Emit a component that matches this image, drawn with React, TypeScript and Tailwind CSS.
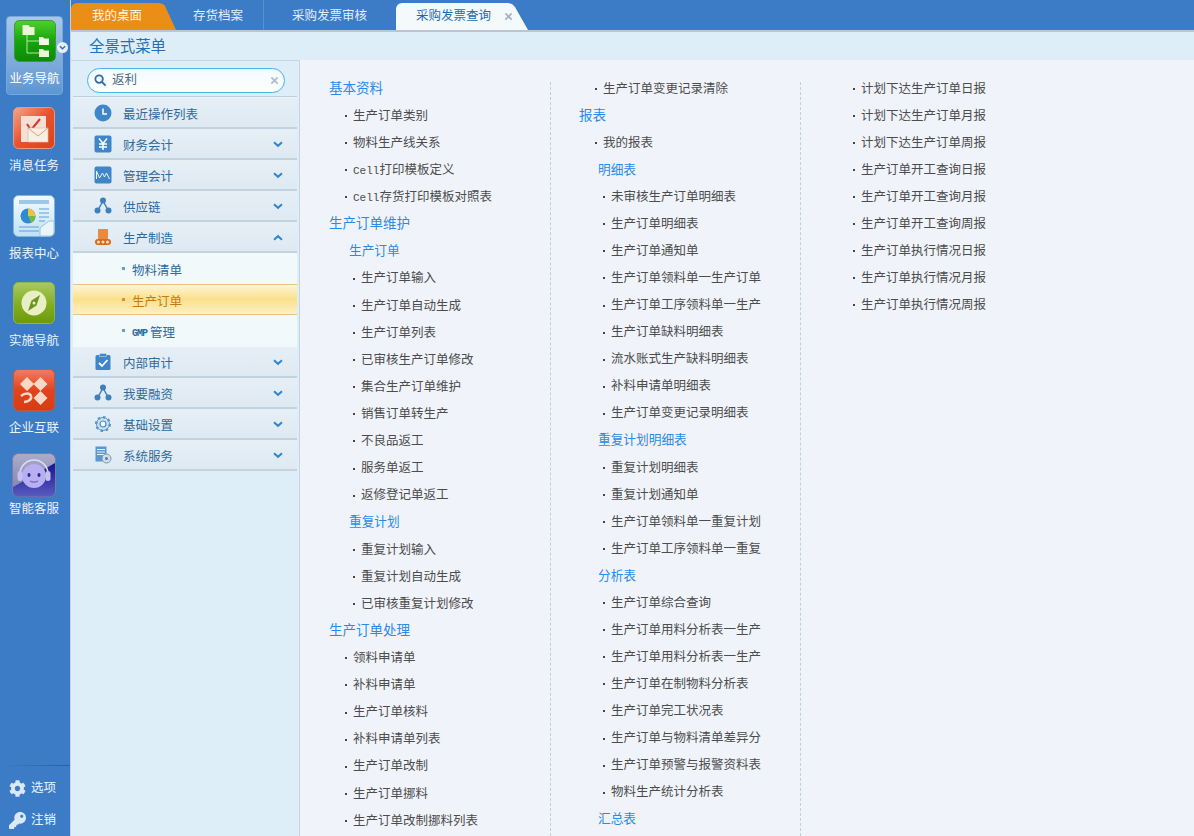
import type { ReactNode } from 'react'
import { FaCog, FaKey } from 'react-icons/fa'

const cjk = "font-['Liberation_Sans','Noto_Sans_CJK_SC',sans-serif]"

function TreeTile() {
  return (
    <svg viewBox="0 0 42 42" className="w-[42px] h-[42px]">
      <defs>
        <linearGradient id="tg" x1="0" y1="0" x2="0" y2="1">
          <stop offset="0" stopColor="#4fd02c" />
          <stop offset="0.5" stopColor="#16a50c" />
          <stop offset="1" stopColor="#0b8a08" />
        </linearGradient>
      </defs>
      <rect x="0.5" y="0.5" width="41" height="41" rx="5" fill="url(#tg)" stroke="#3c9a3a" />
      <path d="M13 15V33M13 21H25M13 33H25" stroke="#b8e8a0" strokeWidth="1" fill="none" />
      <path d="M8.500 5h6l1.500 2h4.500v8h-12z" fill="#e9f6d5" />
      <path d="M25 17h4l1 1.500h5V25H25z" fill="#f2f8e6" />
      <path d="M25 29h4l1 1.500h5V37H25z" fill="#e9f6d5" />
    </svg>
  )
}

function MailTile() {
  return (
    <svg viewBox="0 0 42 42" className="w-[42px] h-[42px]">
      <defs>
        <linearGradient id="mg" x1="0" y1="0" x2="1" y2="1">
          <stop offset="0" stopColor="#f8a58c" />
          <stop offset="0.5" stopColor="#e9512a" />
          <stop offset="1" stopColor="#d8441c" />
        </linearGradient>
      </defs>
      <rect x="0.5" y="0.500" width="41" height="41" rx="5" fill="url(#mg)" stroke="#e89a80" />
      <rect x="8" y="9" width="25" height="26" fill="#f6dfd4" />
      <path d="M14 17l4 6 9-11" stroke="#d8352a" strokeWidth="2" fill="none" />
      <rect x="15" y="21" width="20" height="14" fill="#fbeee3" stroke="#e6b9a0" strokeWidth="0.7" />
      <path d="M15 21l10 8 10-8" stroke="#d9a084" strokeWidth="1" fill="none" />
    </svg>
  )
}

function ReportTile() {
  return (
    <svg viewBox="0 0 42 42" className="w-[42px] h-[42px]">
      <defs>
        <linearGradient id="rg" x1="0" y1="0" x2="0" y2="1">
          <stop offset="0" stopColor="#f4fafe" />
          <stop offset="1" stopColor="#bfe0f4" />
        </linearGradient>
      </defs>
      <rect x="0.5" y="0.5" width="41" height="41" rx="5" fill="url(#rg)" stroke="#7fb4dc" />
      <rect x="6" y="5" width="30" height="4" fill="#9cc8ea" />
      <circle cx="15" cy="21" r="7.500" fill="#2c8ad8" />
      <path d="M15 21V13.500A7.500 7.500 0 0 1 22.500 21z" fill="#f0c040" />
      <path d="M15 21H22.500A7.500 7.500 0 0 1 18 28z" fill="#74b84a" />
      <path d="M26 14H36M26 18H36M26 22H36M26 26H32M6 32H26M6 36H26" stroke="#5d9fd6" strokeWidth="1.200" />
      <path d="M27 41V33l9-7h5v11a4 4 0 0 1-4 4z" fill="#eaf5fb" stroke="#9cc4de" />
    </svg>
  )
}

function CompassTile() {
  return (
    <svg viewBox="0 0 42 42" className="w-[42px] h-[42px]">
      <defs>
        <linearGradient id="cg" x1="0" y1="0" x2="0" y2="1">
          <stop offset="0" stopColor="#a9c963" />
          <stop offset="0.55" stopColor="#82ad1e" />
          <stop offset="1" stopColor="#6c9a0c" />
        </linearGradient>
      </defs>
      <rect x="0.5" y="0.5" width="41" height="41" rx="5" fill="url(#cg)" stroke="#8fb648" />
      <circle cx="21" cy="21" r="12.500" fill="#e8efc4" />
      <path d="M27 13L23.500 23.500 15 29l3.500-10.500z" fill="#6d9420" />
      <circle cx="21" cy="21" r="1.500" fill="#e8efc4" />
    </svg>
  )
}

function LinkTile() {
  return (
    <svg viewBox="0 0 42 42" className="w-[42px] h-[42px]">
      <defs>
        <linearGradient id="lg" x1="0" y1="0" x2="0" y2="1">
          <stop offset="0" stopColor="#f47c62" />
          <stop offset="0.5" stopColor="#e2431c" />
          <stop offset="1" stopColor="#d63c14" />
        </linearGradient>
      </defs>
      <rect x="0.5" y="0.5" width="41" height="41" rx="5" fill="url(#lg)" stroke="#c8552c" />
      <path d="M14 8l7 7-7 7-7-7zM27.500 8l7 7-7 7-7-7zM27.500 22l7 7-7 7-7-7z" fill="#f9d8c6" />
      <path d="M8 27c4-3.500 9-3.500 10 0s-3 6-7 6" stroke="#f9d8c6" strokeWidth="2.500" fill="none" />
    </svg>
  )
}

function ServiceTile() {
  return (
    <svg viewBox="0 0 44 44" className="w-[44px] h-[44px]">
      <defs>
        <linearGradient id="sg" x1="0" y1="0" x2="0" y2="1">
          <stop offset="0" stopColor="#acacc8" />
          <stop offset="1" stopColor="#7c7cb0" />
        </linearGradient>
        <linearGradient id="sn" x1="0" y1="0" x2="0" y2="1">
          <stop offset="0" stopColor="#16168c" />
          <stop offset="1" stopColor="#5a5ac0" />
        </linearGradient>
      </defs>
      <rect x="0.5" y="0.5" width="43" height="43" rx="6" fill="url(#sg)" stroke="#7a7aa8" />
      <path d="M1 34L43 10V38a5.500 5.500 0 0 1-5.500 5.500H6.500A5.500 5.500 0 0 1 1 38z" fill="url(#sn)" />
      <path d="M8 21a14 14 0 0 1 28 0" stroke="#e0dcf6" strokeWidth="1.500" fill="none" />
      <circle cx="22" cy="23" r="12" fill="#b8aef2" />
      <rect x="5.500" y="18" width="5" height="10" rx="2.500" fill="#c8c0ec" />
      <rect x="33.500" y="18" width="5" height="10" rx="2.500" fill="#c8c0ec" />
      <ellipse cx="17" cy="22" rx="1.500" ry="2" fill="#2a2a90" />
      <ellipse cx="27" cy="22" rx="1.500" ry="2" fill="#2a2a90" />
      <path d="M18 28c2 1.500 6 1.500 8 0" stroke="#5a50b8" strokeWidth="1" fill="none" />
    </svg>
  )
}

function RailItem({ tile, label, className }: { tile: ReactNode; label: string; className: string }) {
  return (
    <div className={`flex flex-col items-center pr-[2px] ${className}`}>
      {tile}
      <span className="text-[12.5px] leading-[18px] text-[#eaf3fb] whitespace-nowrap">{label}</span>
    </div>
  )
}

function Rail() {
  return (
    <div className="w-[70px] shrink-0 flex flex-col bg-[#3c7cc6]">
      <div className="relative mt-[16px] ml-[6px] mr-[7px] h-[79px] pt-[3px] rounded-[4px] border border-[#78a8d8] bg-gradient-to-b from-[#a9c8e8] to-[#5e96d2] flex flex-col items-center">
        <TreeTile />
        <span className="mt-[8px] text-[12.500px] leading-[18px] text-white whitespace-nowrap">业务导航</span>
        <span className="absolute -right-[6px] top-[25px] w-[11px] h-[11px] rounded-full bg-[#e4eef6] flex items-center justify-center">
          <svg viewBox="0 0 8 8" className="w-[7px] h-[7px]">
            <path d="M1 2.500l3 3 3-3" stroke="#3c6a98" strokeWidth="1.500" fill="none" />
          </svg>
        </span>
      </div>
      <RailItem tile={<MailTile />} label="消息任务" className="mt-[12px] gap-[8px]" />
      <RailItem tile={<ReportTile />} label="报表中心" className="mt-[20px] gap-[8px]" />
      <RailItem tile={<CompassTile />} label="实施导航" className="mt-[19px] gap-[8px]" />
      <RailItem tile={<LinkTile />} label="企业互联" className="mt-[19px] gap-[8px]" />
      <RailItem tile={<ServiceTile />} label="智能客服" className="mt-[16px] gap-[3px]" />
      <div className="mt-auto h-px bg-gradient-to-r from-transparent to-[#2b5f9e]" />
      <div className="h-[32px] mt-[6px] flex items-center pl-[9px] gap-[5px] text-[12.500px] text-[#eaf3fb]">
        <FaCog className="w-[17px] h-[17px] text-[#dce9f4]" />
        选项
      </div>
      <div className="h-[32px] flex items-center pl-[9px] gap-[5px] text-[12.500px] text-[#eaf3fb]">
        <FaKey className="w-[17px] h-[17px] text-[#dce9f4]" />
        注销
      </div>
    </div>
  )
}

function Tabs() {
  return (
    <div className="h-[30px] shrink-0 bg-[#3c7cc6] flex items-end text-[12.500px]">
      <div className="w-[105px] h-[27px] pl-[21px] leading-[27px] text-[#fdf4e4] rounded-tl-[6px] bg-[#ea8e17] [clip-path:polygon(0_0,88px_0,92px_1px,94px_3px,105px_27px,0_27px)]">
        我的桌面
      </div>
      <div className="w-[88px] h-[30px] pl-[17px] pt-[3px] leading-[27px] text-[#e2eef8] border-r border-[#5a90cc]">
        存货档案
      </div>
      <div className="w-[132px] h-[27px] pl-[28px] leading-[27px] text-[#e2eef8]">采购发票审核</div>
      <div className="w-[132px] h-[27px] pl-[20px] flex items-center bg-[#f4fafc] text-[#1a6cb4] rounded-tl-[6px] [clip-path:polygon(0_0,112px_0,116px_1px,119px_4px,132px_27px,0_27px)]">
        采购发票查询
        <svg viewBox="0 0 10 10" className="w-[9px] h-[9px] ml-[13px]">
          <path d="M1.500 1.500l7 7M8.500 1.500l-7 7" stroke="#a8b4bf" strokeWidth="2" />
        </svg>
      </div>
    </div>
  )
}

const Chevron = ({ up }: { up?: boolean }) => (
  <svg viewBox="0 0 10 7" className={`w-[10px] h-[7px] mt-[2px] ${up ? 'rotate-180' : ''}`}>
    <path d="M1 1.200l4 3.600 4-3.600" stroke="#2f86cf" strokeWidth="2" fill="none" />
  </svg>
)

const iconCls = 'w-[18px] h-[18px] shrink-0'

const icons: Record<string, ReactNode> = {
  clock: (
    <svg viewBox="0 0 18 18" className={iconCls}>
      <circle cx="9" cy="9" r="8.500" fill="#3f86c8" />
      <path d="M9 4.500V10H13" stroke="#fff" strokeWidth="1.500" fill="none" />
    </svg>
  ),
  yen: (
    <svg viewBox="0 0 18 18" className={iconCls}>
      <rect x="0.500" y="0.500" width="17" height="17" rx="2" fill="#3f86c8" />
      <path d="M5 3.500l4 5 4-5M9 8.500V15M5 9h8M5 12h8" stroke="#fff" strokeWidth="1.500" fill="none" />
    </svg>
  ),
  chart: (
    <svg viewBox="0 0 18 18" className={iconCls}>
      <rect x="0.500" y="0.500" width="17" height="17" rx="2" fill="#3f86c8" />
      <path d="M2.500 13V5l3 7 3-5 2 4 2-4 3 6" stroke="#e8f2fa" strokeWidth="1" fill="none" />
    </svg>
  ),
  tree: (
    <svg viewBox="0 0 18 18" className={iconCls}>
      <path d="M9 4L4 13M9 4l5 9" stroke="#3f80bc" strokeWidth="1.500" />
      <circle cx="9" cy="3.500" r="3" fill="#3f80bc" />
      <circle cx="3.500" cy="13.500" r="3" fill="#3f80bc" />
      <circle cx="14.500" cy="13.500" r="3" fill="#3f80bc" />
    </svg>
  ),
  factory: (
    <svg viewBox="0 0 18 18" className={iconCls}>
      <rect x="4" y="1" width="10" height="11" fill="#ea8a3c" />
      <rect x="1" y="11" width="16" height="6" rx="3" fill="#d06a24" />
      <circle cx="4.500" cy="14" r="1.500" fill="#fde0c4" />
      <circle cx="9" cy="14" r="1.500" fill="#fde0c4" />
      <circle cx="13.500" cy="14" r="1.500" fill="#fde0c4" />
    </svg>
  ),
  audit: (
    <svg viewBox="0 0 18 18" className={iconCls}>
      <rect x="1.500" y="2" width="15" height="15" rx="1.500" fill="#3f86c8" />
      <rect x="5.500" y="0.500" width="7" height="3" fill="#3f86c8" stroke="#e0eef8" strokeWidth="0.500" />
      <path d="M5 10l3 3 5.500-6" stroke="#fff" strokeWidth="1.800" fill="none" />
    </svg>
  ),
  gear: (
    <svg viewBox="0 0 18 18" className={iconCls}>
      <circle cx="9" cy="9" r="6.500" fill="#cfe2f2" stroke="#5a96cc" strokeWidth="1" />
      <circle cx="9" cy="9" r="6.800" fill="none" stroke="#5a96cc" strokeWidth="2.500" strokeDasharray="2.500 2.800" />
      <circle cx="9" cy="9" r="3" fill="#f0f6fb" stroke="#4a88c0" strokeWidth="1.200" />
    </svg>
  ),
  service: (
    <svg viewBox="0 0 18 18" className={iconCls}>
      <rect x="1.500" y="0.500" width="11" height="15" fill="#5a98d0" />
      <path d="M3 3.500h8M3 6h8M3 8.500h8" stroke="#e4f0fa" strokeWidth="1" />
      <circle cx="12.500" cy="12.500" r="4.500" fill="#cfdde9" stroke="#7c9ab4" />
      <circle cx="12.500" cy="12.500" r="1.500" fill="#5a7f9f" />
    </svg>
  ),
}

function MenuRow({ icon, label, chevron = 'down' }: { icon: string; label: string; chevron?: 'down' | 'up' | 'none' }) {
  return (
    <div className="h-[31px] pl-[21px] pr-[14px] flex items-center bg-gradient-to-b from-[#e6eff6] to-[#dee9f2] border-b-2 border-[#c2d2df]">
      {icons[icon]}
      <span className="ml-[11px] flex-1 pt-[6px] text-[12.500px] text-[#2f6a9c]">{label}</span>
      {chevron !== 'none' && <Chevron up={chevron === 'up'} />}
    </div>
  )
}

function SubRow({ label, active, children }: { label?: string; active?: boolean; children?: ReactNode }) {
  return (
    <div
      className={
        active
          ? 'h-[31px] pl-[49px] flex items-center gap-[7px] text-[12.500px] text-[#c87a12] border-y border-[#e8c480] bg-gradient-to-b from-[#fdf5d2] via-[#fbe08c] to-[#fdf0c4]'
          : 'h-[31px] pl-[49px] flex items-center gap-[7px] text-[12.500px] text-[#2f6a9c] bg-[#f1f9fa]'
      }
    >
      <span className={active ? 'w-[3px] h-[3px] bg-[#e09030]' : 'w-[3px] h-[3px] bg-[#6a9cc6]'} />
      <span className="pt-[5px] flex items-center gap-[3px]">
        {label}
        {children}
      </span>
    </div>
  )
}

function Sidebar() {
  return (
    <div className="w-[229px] shrink-0 flex flex-col bg-[#deeef8] pl-[2px] border-r border-[#c4d4e0]">
      <div className="h-[36px] -ml-[2px] pl-[16px] pt-[3px] flex items-center border-t border-[#c6d4e4]">
        <div className="w-[198px] h-[25px] rounded-full border border-[#46b2ee] bg-gradient-to-b from-[#f2fafd] to-white flex items-center pl-[6px] pr-[5px]">
          <svg viewBox="0 0 14 14" className="w-[13px] h-[13px] shrink-0">
            <circle cx="5.500" cy="5.500" r="4" stroke="#2f6fa8" strokeWidth="2" fill="none" />
            <path d="M8.500 8.500l4 4" stroke="#2f6fa8" strokeWidth="2.200" />
          </svg>
          <span className="ml-[5px] flex-1 text-[12.500px] text-[#4a6a84]">返利</span>
          <svg viewBox="0 0 10 10" className="w-[9px] h-[9px] shrink-0">
            <path d="M1.500 1.500l7 7M8.500 1.500l-7 7" stroke="#b4bec8" strokeWidth="2" />
          </svg>
        </div>
      </div>
      <div className="mr-[2px] h-[2px] border-t border-[#bccddb] bg-[#eef5fa]" />
      <div className="mr-[2px]">
        <MenuRow icon="clock" label="最近操作列表" chevron="none" />
        <MenuRow icon="yen" label="财务会计" />
        <MenuRow icon="chart" label="管理会计" />
        <MenuRow icon="tree" label="供应链" />
        <MenuRow icon="factory" label="生产制造" chevron="up" />
        <div className="pb-[1px] bg-[#f1f9fa]">
          <SubRow label="物料清单" />
          <SubRow label="生产订单" active />
          <SubRow>
            <span className="font-['Liberation_Mono'] text-[10px] font-bold tracking-[-1px]">GMP</span>
            管理
          </SubRow>
        </div>
        <MenuRow icon="audit" label="内部审计" />
        <MenuRow icon="tree" label="我要融资" />
        <MenuRow icon="gear" label="基础设置" />
        <MenuRow icon="service" label="系统服务" />
      </div>
    </div>
  )
}

type Row = [kind: 'h' | 's' | 'i' | 'j', text: string]

const colA: Row[] = [
  ['h', '基本资料'],
  ['i', '生产订单类别'],
  ['i', '物料生产线关系'],
  ['i', 'Cell|打印模板定义'],
  ['i', 'Cell|存货打印模板对照表'],
  ['h', '生产订单维护'],
  ['s', '生产订单'],
  ['j', '生产订单输入'],
  ['j', '生产订单自动生成'],
  ['j', '生产订单列表'],
  ['j', '已审核生产订单修改'],
  ['j', '集合生产订单维护'],
  ['j', '销售订单转生产'],
  ['j', '不良品返工'],
  ['j', '服务单返工'],
  ['j', '返修登记单返工'],
  ['s', '重复计划'],
  ['j', '重复计划输入'],
  ['j', '重复计划自动生成'],
  ['j', '已审核重复计划修改'],
  ['h', '生产订单处理'],
  ['i', '领料申请单'],
  ['i', '补料申请单'],
  ['i', '生产订单核料'],
  ['i', '补料申请单列表'],
  ['i', '生产订单改制'],
  ['i', '生产订单挪料'],
  ['i', '生产订单改制挪料列表'],
]

const colB: Row[] = [
  ['i', '生产订单变更记录清除'],
  ['h', '报表'],
  ['i', '我的报表'],
  ['s', '明细表'],
  ['j', '未审核生产订单明细表'],
  ['j', '生产订单明细表'],
  ['j', '生产订单通知单'],
  ['j', '生产订单领料单一生产订单'],
  ['j', '生产订单工序领料单一生产'],
  ['j', '生产订单缺料明细表'],
  ['j', '流水账式生产缺料明细表'],
  ['j', '补料申请单明细表'],
  ['j', '生产订单变更记录明细表'],
  ['s', '重复计划明细表'],
  ['j', '重复计划明细表'],
  ['j', '重复计划通知单'],
  ['j', '生产订单领料单一重复计划'],
  ['j', '生产订单工序领料单一重复'],
  ['s', '分析表'],
  ['j', '生产订单综合查询'],
  ['j', '生产订单用料分析表一生产'],
  ['j', '生产订单用料分析表一生产'],
  ['j', '生产订单在制物料分析表'],
  ['j', '生产订单完工状况表'],
  ['j', '生产订单与物料清单差异分'],
  ['j', '生产订单预警与报警资料表'],
  ['j', '物料生产统计分析表'],
  ['s', '汇总表'],
]

const colC: Row[] = [
  ['j', '计划下达生产订单日报'],
  ['j', '计划下达生产订单月报'],
  ['j', '计划下达生产订单周报'],
  ['j', '生产订单开工查询日报'],
  ['j', '生产订单开工查询月报'],
  ['j', '生产订单开工查询周报'],
  ['j', '生产订单执行情况日报'],
  ['j', '生产订单执行情况月报'],
  ['j', '生产订单执行情况周报'],
]

function ListRow({ kind, text, rowH, subPl }: { kind: Row[0]; text: string; rowH: string; subPl: string }) {
  if (kind === 'h') {
    return <div className={`${rowH} flex items-center text-[13.500px] text-[#2b8ae8]`}>{text}</div>
  }
  if (kind === 's') {
    return <div className={`${rowH} ${subPl} flex items-center text-[12.700px] text-[#2b8ae8]`}>{text}</div>
  }
  const parts = text.split('|')
  return (
    <div
      className={`${rowH} flex items-center gap-[6px] whitespace-nowrap text-[12.500px] text-[#4c4c4c] ${
        kind === 'i' ? 'pl-[16px]' : 'pl-[24px]'
      }`}
    >
      <span className="w-[2px] h-[2px] bg-[#444] shrink-0" />
      <span>
        {parts.length > 1 && <span className="font-['Liberation_Mono'] text-[11px]">{parts[0]}</span>}
        {parts[parts.length - 1]}
      </span>
    </div>
  )
}

function Column({ rows, rowH, subPl, className }: { rows: Row[]; rowH: string; subPl: string; className: string }) {
  return (
    <div className={`pt-[15.500px] ${className}`}>
      {rows.map((r, i) => (
        <ListRow key={i} kind={r[0]} text={r[1]} rowH={rowH} subPl={subPl} />
      ))}
    </div>
  )
}

export default function App() {
  return (
    <div className={`w-[1194px] h-[836px] overflow-hidden flex bg-[#3c7cc6] ${cjk}`}>
      <Rail />
      <div className="w-[2px] shrink-0 bg-[#c9d0d6]" />
      <div className="flex-1 flex flex-col min-w-0 -ml-[1px]">
        <Tabs />
        <div className="h-[30px] shrink-0 pl-[18px] pt-[2px] flex items-center border-t-2 border-[#bcc6d2] bg-[#deeef8] text-[15.400px] text-[#1f72b8]">
          全景式菜单
        </div>
        <div className="flex-1 flex min-h-0">
          <Sidebar />
          <div className="flex-1 flex bg-[#f0f4fa] overflow-hidden">
            <Column rows={colA} rowH="h-[27.120px]" subPl="pl-[20px]" className="w-[250px] pl-[29px] shrink-0" />
            <div className="mt-[22px] border-l border-dashed border-[#bcd0e0]" />
            <Column rows={colB} rowH="h-[27.070px]" subPl="pl-[19px]" className="w-[249px] pl-[28px] shrink-0" />
            <div className="mt-[22px] border-l border-dashed border-[#bcd0e0]" />
            <Column rows={colC} rowH="h-[27px]" subPl="pl-[19px]" className="pl-[28px] flex-1" />
          </div>
        </div>
      </div>
    </div>
  )
}
